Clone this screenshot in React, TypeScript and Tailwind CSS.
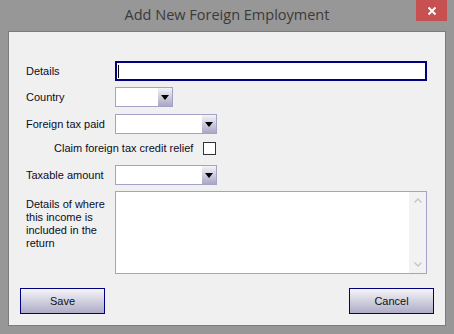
import React from "react";

const labelFont = { fontFamily: '"Liberation Sans", Arial, sans-serif' };

function Arrow() {
  return (
    <svg width="8" height="5" viewBox="0 0 8 5">
      <path d="M0 0 H8 L4 5 Z" fill="#000" />
    </svg>
  );
}

function Combo({ w }: { w: string }) {
  return (
    <div className={`${w} h-[20px] flex border border-[#a4a2c6] bg-white`}>
      <div className="flex-1" />
      <div className="w-[14px] h-full flex items-center justify-center bg-gradient-to-b from-[#f4f4f8] to-[#a9a7c3]">
        <Arrow />
      </div>
    </div>
  );
}

function Btn({ children }: { children: React.ReactNode }) {
  return (
    <div className="w-[85px] h-[26px] border border-[#000080] bg-gradient-to-b from-[#f6f6f9] to-[#aeacc6] flex items-center justify-center text-[11px] text-[#111]">
      {children}
    </div>
  );
}

export default function App() {
  return (
    <div className="w-[454px] h-[334px] bg-[#979797] flex flex-col" style={labelFont}>
      <div className="h-[31px] relative flex items-center justify-center">
        <span
          className="text-[14.5px] text-[#3a3a3a] -mt-[2px]"
          style={{ fontFamily: '"Open Sans", "Noto Sans", sans-serif' }}
        >
          Add New Foreign Employment
        </span>
        <div className="absolute right-[7px] top-0 w-[31px] h-[21px] bg-[#c75050] flex items-center justify-center">
          <svg width="10" height="10" viewBox="0 0 10 10">
            <path d="M1.5 1.5 L8.5 8.5 M8.5 1.5 L1.5 8.5" stroke="#fff" strokeWidth="2" />
          </svg>
        </div>
      </div>
      <div className="mx-[8px] mb-[8px] flex-1 bg-[#f0f0f0] border border-[#7c7c7c] flex flex-col text-[11px] text-[#0c0c24]">
        <div className="pl-[17px] pt-[29px] flex flex-col">
          <div className="h-[20px] flex items-center">
            <div className="w-[89px]">Details</div>
            <div className="w-[312px] h-[20px] border-2 border-[#000080] bg-white flex items-center pl-[1px]">
              <div className="w-[1px] h-[13px] bg-black" />
            </div>
          </div>
          <div className="h-[20px] flex items-center mt-[6px]">
            <div className="w-[89px]">Country</div>
            <Combo w="w-[58px]" />
          </div>
          <div className="h-[20px] flex items-center mt-[7px]">
            <div className="w-[89px]">Foreign tax paid</div>
            <Combo w="w-[102px]" />
          </div>
          <div className="h-[13px] flex items-center mt-[8px]">
            <div className="w-[177px] pl-[28px]">Claim foreign tax credit relief</div>
            <div className="w-[13px] h-[13px] border border-[#333] bg-white" />
          </div>
          <div className="h-[20px] flex items-center mt-[10px]">
            <div className="w-[89px]">Taxable amount</div>
            <Combo w="w-[102px]" />
          </div>
          <div className="h-[83px] flex mt-[6px]">
            <div className="w-[89px] pt-[7px] leading-[13px]">
              Details of where
              <br />
              this income is
              <br />
              included in the
              <br />
              return
            </div>
            <div className="w-[312px] h-full border border-[#a4a2c6] bg-white flex">
              <div className="flex-1" />
              <div className="w-[17px] h-full bg-[#f2f2f2] flex flex-col items-center justify-between py-[6px]">
                <svg width="8" height="5" viewBox="0 0 8 5">
                  <path d="M0.5 4.5 L4 1 L7.5 4.5" stroke="#c4c4c4" strokeWidth="1.3" fill="none" />
                </svg>
                <svg width="8" height="5" viewBox="0 0 8 5">
                  <path d="M0.5 0.5 L4 4 L7.5 0.5" stroke="#c4c4c4" strokeWidth="1.3" fill="none" />
                </svg>
              </div>
            </div>
          </div>
        </div>
        <div className="px-[11px] mt-[14px] flex justify-between">
          <Btn>Save</Btn>
          <Btn>Cancel</Btn>
        </div>
      </div>
    </div>
  );
}
